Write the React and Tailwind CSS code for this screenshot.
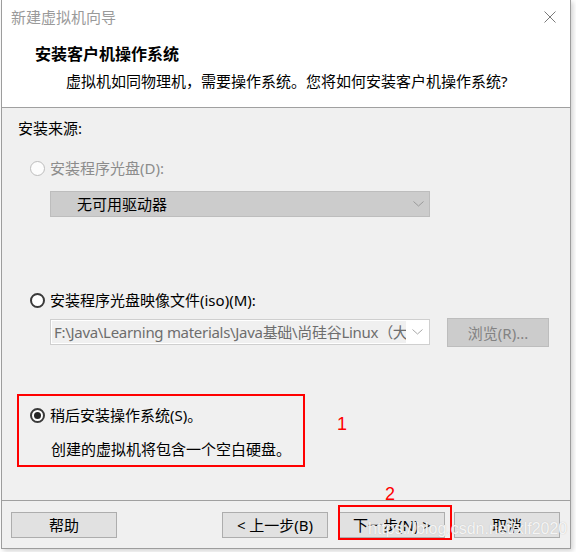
import React from "react";

const Radio = ({ checked = false, disabled = false }) => (
  <span
    className={`w-[15px] h-[15px] rounded-full flex items-center justify-center shrink-0 ${
      disabled
        ? "border border-[#bcbcbc] bg-[#fcfcfc]"
        : "border-2 border-[#3a3a3a] bg-white"
    }`}
  >
    {checked && <span className="w-[7px] h-[7px] rounded-full bg-[#262626]" />}
  </span>
);

const Chevron = ({ color = "#9a9a9a" }) => (
  <svg width="11" height="6" viewBox="0 0 11 6" fill="none">
    <path d="M0.5 0.5 L5.5 5 L10.5 0.5" stroke={color} strokeWidth="1" />
  </svg>
);

const Button = ({ children }) => (
  <button className="w-[106px] h-[26px] bg-[#e1e1e1] border border-[#adadad] text-[15px] leading-none text-black flex items-center justify-center">
    {children}
  </button>
);

export default function App() {
  return (
    <div className="relative w-[576px] h-[552px] bg-white overflow-hidden font-['Noto_Sans','Noto_Sans_CJK_SC',sans-serif] text-[15px] text-black">
      {/* Window */}
      <div className="ml-[1px] w-[570px] h-[549px] flex flex-col bg-[#f0f0f0] border-l border-r border-b border-[#9d9d9d] shadow-[2px_2px_5px_rgba(0,0,0,0.18)]">
        {/* Header */}
        <div className="h-[108px] shrink-0 bg-white border-b border-[#a0a0a0]">
          <div className="h-[34px] flex items-center justify-between pl-[9px] pr-[14px]">
            <span className="text-[15px] leading-[20px] text-[#9a9a9a]">新建虚拟机向导</span>
            <svg width="12" height="12" viewBox="0 0 12 12">
              <path d="M0.5 0.5 L11.5 11.5 M11.5 0.5 L0.5 11.5" stroke="#7a7a7a" strokeWidth="1" />
            </svg>
          </div>
          <div className="mt-[10px] pl-[33px] text-[16px] leading-[20px] font-bold">
            安装客户机操作系统
          </div>
          <div className="mt-[7px] pl-[64px] leading-[20px]">
            虚拟机如同物理机，需要操作系统。您将如何安装客户机操作系统?
          </div>
        </div>

        {/* Body */}
        <div className="h-[392px] shrink-0 flex flex-col">
          <div className="mt-[10px] pl-[16px] leading-[20px]">安装来源:</div>

          <div className="mt-[20px] pl-[28px] h-[20px] flex items-center gap-[5px]">
            <Radio disabled />
            <span className="leading-[20px] text-[#8c8c8c]">安装程序光盘(D):</span>
          </div>

          <div className="mt-[13px] ml-[48px] w-[380px] h-[26px] bg-[#cccccc] border border-[#bdbdbd] flex items-center justify-between pl-[26px] pr-[5px]">
            <span className="leading-[20px]">无可用驱动器</span>
            <Chevron color="#9a9a9a" />
          </div>

          <div className="mt-[73px] pl-[28px] h-[20px] flex items-center gap-[5px]">
            <Radio />
            <span className="leading-[20px]">安装程序光盘映像文件(iso)(M):</span>
          </div>

          <div className="mt-[8px] ml-[48px] flex items-start">
            <div className="mt-[1px] w-[380px] h-[26px] bg-white border border-[#cfcfcf] flex items-center">
              <div className="w-[354px] h-[22px] ml-[1px] bg-[#f0f0f0] overflow-hidden whitespace-nowrap pl-[2px] leading-[22px] text-[#6d6d6d] tracking-[-0.3px]">
                F:\Java\Learning materials\Java基础\尚硅谷Linux（大
              </div>
              <div className="flex-1 flex justify-center">
                <Chevron color="#a8a8a8" />
              </div>
            </div>
            <div className="ml-[17px] w-[102px] h-[29px] bg-[#cccccc] border border-[#bdbdbd] flex items-center justify-center text-[#838383] leading-[20px]">
              浏览(R)...
            </div>
          </div>

          <div className="mt-[47px] ml-[15px] flex items-start">
            <div className="w-[288px] h-[73px] border-2 border-[#ff0000] pl-[11px] pt-[9px]">
              <div className="h-[20px] flex items-center gap-[5px]">
                <Radio checked />
                <span className="leading-[20px]">稍后安装操作系统(S)。</span>
              </div>
              <div className="mt-[14px] pl-[21px] leading-[20px]">
                创建的虚拟机将包含一个空白硬盘。
              </div>
            </div>
            <span className="ml-[32px] mt-[20px] text-[18px] leading-[20px] text-[#ff0000] font-['Liberation_Sans',sans-serif]">
              1
            </span>
          </div>
        </div>

        {/* Footer */}
        <div className="flex-1 border-t border-[#a0a0a0] flex items-start pt-[11px] pl-[9px] pr-[10px]">
          <Button>帮助</Button>
          <div className="ml-auto flex items-start">
            <Button>&lt; 上一步(B)</Button>
            <div className="relative ml-[11px]">
              <Button>下一步(N) &gt;</Button>
              <div className="absolute -left-[1px] -top-[7px] w-[114px] h-[35px] border-2 border-[#ff0000]" />
              <span className="absolute left-[46px] -top-[28px] text-[18px] leading-[20px] text-[#ff0000] font-['Liberation_Sans',sans-serif]">
                2
              </span>
            </div>
            <div className="ml-[9px]">
              <Button>取消</Button>
            </div>
          </div>
        </div>
      </div>

      {/* Watermark */}
      <span className="absolute left-[368px] top-[519px] text-[16px] leading-[20px] text-white/85 font-['Liberation_Sans',sans-serif] [text-shadow:0_0_1px_#b4b4b4]">
        https://blog.csdn.net/xlf2020
      </span>
    </div>
  );
}
